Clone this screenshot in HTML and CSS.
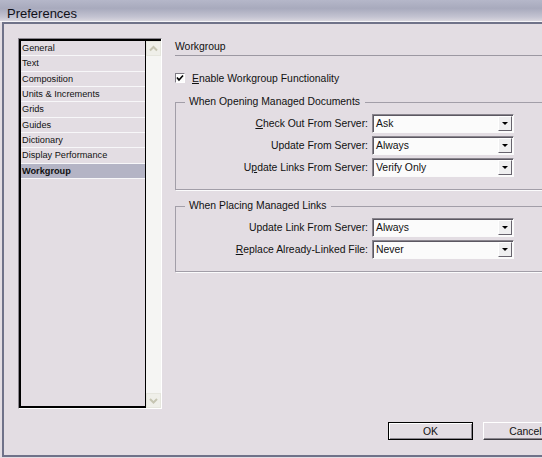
FILE: index.html
```html
<!DOCTYPE html>
<html lang="en">
<head>
    <meta charset="UTF-8">
    <title>Preferences</title>
    <link rel="stylesheet" href="styles.css">
</head>
<body>
    <div class="window">
        <div class="titlebar">Preferences</div>
        <div class="frame">
            <div class="content">
                <div class="listbox">
                    <div class="listbox-inner">
                        <ul class="list">
                            <li>General</li>
                            <li>Text</li>
                            <li>Composition</li>
                            <li>Units &amp; Increments</li>
                            <li>Grids</li>
                            <li>Guides</li>
                            <li>Dictionary</li>
                            <li>Display Performance</li>
                            <li class="selected">Workgroup</li>
                        </ul>
                        <div class="scrollbar">
                            <div class="scroll-btn">
                                <svg width="13" height="13" viewBox="0 0 13 13"><polyline points="3,8.5 6.5,5 10,8.5" fill="none" stroke="#c6c5b2" stroke-width="2"/></svg>
                            </div>
                            <div class="scroll-btn">
                                <svg width="13" height="13" viewBox="0 0 13 13"><polyline points="3,5 6.5,8.5 10,5" fill="none" stroke="#c6c5b2" stroke-width="2"/></svg>
                            </div>
                        </div>
                    </div>
                </div>

                <div class="panel">
                    <div class="panel-title">Workgroup</div>
                    <label class="check-row">
                        <span class="checkbox">
                            <svg width="8" height="8" viewBox="0 0 8 8"><polyline points="1,3.5 3,6 7,1.5" fill="none" stroke="#000" stroke-width="1.6"/></svg>
                        </span>
                        <span><u>E</u>nable Workgroup Functionality</span>
                    </label>

                    <fieldset class="group">
                        <legend>When Opening Managed Documents</legend>
                        <div class="field-row">
                            <span class="field-label"><u>C</u>heck Out From Server:</span>
                            <div class="dropdown"><span>Ask</span><span class="drop-btn"></span></div>
                        </div>
                        <div class="field-row">
                            <span class="field-label">Update From Server:</span>
                            <div class="dropdown"><span>Always</span><span class="drop-btn"></span></div>
                        </div>
                        <div class="field-row">
                            <span class="field-label">U<u>p</u>date Links From Server:</span>
                            <div class="dropdown"><span>Verify Only</span><span class="drop-btn"></span></div>
                        </div>
                    </fieldset>

                    <fieldset class="group group-second">
                        <legend>When Placing Managed Links</legend>
                        <div class="field-row">
                            <span class="field-label">Update Link From Server:</span>
                            <div class="dropdown"><span>Always</span><span class="drop-btn"></span></div>
                        </div>
                        <div class="field-row">
                            <span class="field-label"><u>R</u>eplace Already-Linked File:</span>
                            <div class="dropdown"><span>Never</span><span class="drop-btn"></span></div>
                        </div>
                    </fieldset>
                </div>
            </div>

            <div class="footer">
                <button class="btn btn-default">OK</button>
                <button class="btn">Cancel</button>
            </div>
        </div>
    </div>
</body>
</html>
```

FILE: styles.css
```css
html, body {
    margin: 0;
    padding: 0;
    width: 542px;
    height: 458px;
    overflow: hidden;
    background-color: #e3dde3;
}
.window {
    width: 584px;
    height: 458px;
    background-color: #e3dde3;
    font-family: "Liberation Sans", Arial, sans-serif;
    color: #111;
    display: flex;
    flex-direction: column;
}
.titlebar {
    height: 21px;
    line-height: 27px;
    padding-left: 7px;
    font-size: 13px;
    color: #101018;
    background: linear-gradient(#b5b7c9, #a8aabd 40%, #c3c3d1 80%, #d8d6de);
    border-bottom: 1px solid #f6f5f8;
    overflow: hidden;
}
.frame {
    flex: 1;
    margin-left: 2px;
    margin-bottom: 1px;
    border-top: 2px solid #6f7289;
    border-left: 2px solid #6f7289;
    border-bottom: 2px solid #6f7289;
    display: flex;
    flex-direction: column;
}
.content {
    display: flex;
    gap: 13px;
    padding: 14px 0 0 14px;
}

/* category list */
.listbox {
    width: 144px;
    height: 371px;
    box-sizing: border-box;
    border: 1px solid;
    border-color: #8a868e #fff #fff #8a868e;
    display: flex;
}
.listbox-inner {
    flex: 1;
    display: flex;
    border-top: 2px solid #000;
    border-left: 2px solid #000;
}
.list {
    flex: 1;
    margin: 0;
    padding: 0;
    list-style: none;
    border-right: 1px solid #000;
    border-bottom: 2px solid #000;
    font-size: 9.2px;
}
.list li {
    height: 14.33px;
    line-height: 14px;
    padding-left: 1px;
    border-bottom: 1px solid #f7f7f9;
    white-space: nowrap;
}
.list li.selected {
    background-color: #b4b4c5;
    font-weight: bold;
}
.scrollbar {
    width: 15px;
    background-color: #f5f5f3;
    display: flex;
    flex-direction: column;
    justify-content: space-between;
}
.scroll-btn {
    width: 15px;
    height: 15px;
    box-sizing: border-box;
    border: 1px solid #e6e6de;
    background-color: #efefe9;
    display: flex;
    align-items: center;
    justify-content: center;
}

/* right panel */
.panel {
    flex: 1;
    font-size: 10.4px;
}
.panel-title {
    height: 17px;
    line-height: 18px;
    border-bottom: 1px solid #9c98a2;
}
.check-row {
    display: flex;
    align-items: center;
    gap: 7px;
    height: 12px;
    margin-top: 16px;
}
.checkbox {
    width: 10px;
    height: 10px;
    box-sizing: border-box;
    border: 1px solid;
    border-color: #7e7a84 #fff #fff #7e7a84;
    background-color: #fcfcfc;
    display: flex;
    align-items: center;
    justify-content: center;
}
.group {
    margin: 12px 0 0 0;
    min-width: 0;
    padding: 6px 0 12px 0;
    border: 1px solid #a29ea8;
    box-shadow: 1px 1px 0 #fbfbfc;
}
.group-second {
    margin-top: 10px;
}
.group legend {
    margin-left: 9px;
    padding: 0 5px 0 4px;
    line-height: 12px;
    font-size: 10.4px;
}
.field-row {
    display: grid;
    grid-template-columns: 192px 142px;
    column-gap: 4px;
    height: 19px;
    margin-bottom: 3px;
}
.field-row:last-child {
    margin-bottom: 0;
}
.field-label {
    text-align: right;
    line-height: 19px;
    white-space: nowrap;
}
.dropdown {
    box-sizing: border-box;
    height: 19px;
    border: 1px solid;
    border-color: #8a868e #fafafa #fafafa #8a868e;
    box-shadow: inset 1px 1px 0 #5c5862;
    background-color: #fbfbfb;
    display: flex;
    align-items: center;
    padding-left: 3px;
}
.drop-btn {
    margin-left: auto;
    margin-right: 1px;
    width: 14px;
    height: 15px;
    box-sizing: border-box;
    border: 1px solid;
    border-color: #fff #67636d #67636d #fff;
    background-color: #efeff0;
    display: flex;
    align-items: center;
    justify-content: center;
}
.drop-btn::after {
    content: "";
    border-left: 3px solid transparent;
    border-right: 3px solid transparent;
    border-top: 3px solid #000;
}

/* buttons */
.footer {
    display: flex;
    justify-content: flex-end;
    gap: 10px;
    margin-top: 13px;
    padding-right: 16px;
}
.btn {
    width: 85px;
    height: 18px;
    padding: 0;
    font-family: "Liberation Sans", Arial, sans-serif;
    font-size: 10.4px;
    color: #111;
    background-color: #e3dde3;
    border: 1px solid;
    border-color: #fff #3c3a40 #3c3a40 #fff;
    box-shadow: inset -1px -1px 0 #8a868e;
}
.btn-default {
    border-color: #000;
    box-shadow: inset 1px 1px 0 #fff, inset -1px -1px 0 #8a868e;
}
```
